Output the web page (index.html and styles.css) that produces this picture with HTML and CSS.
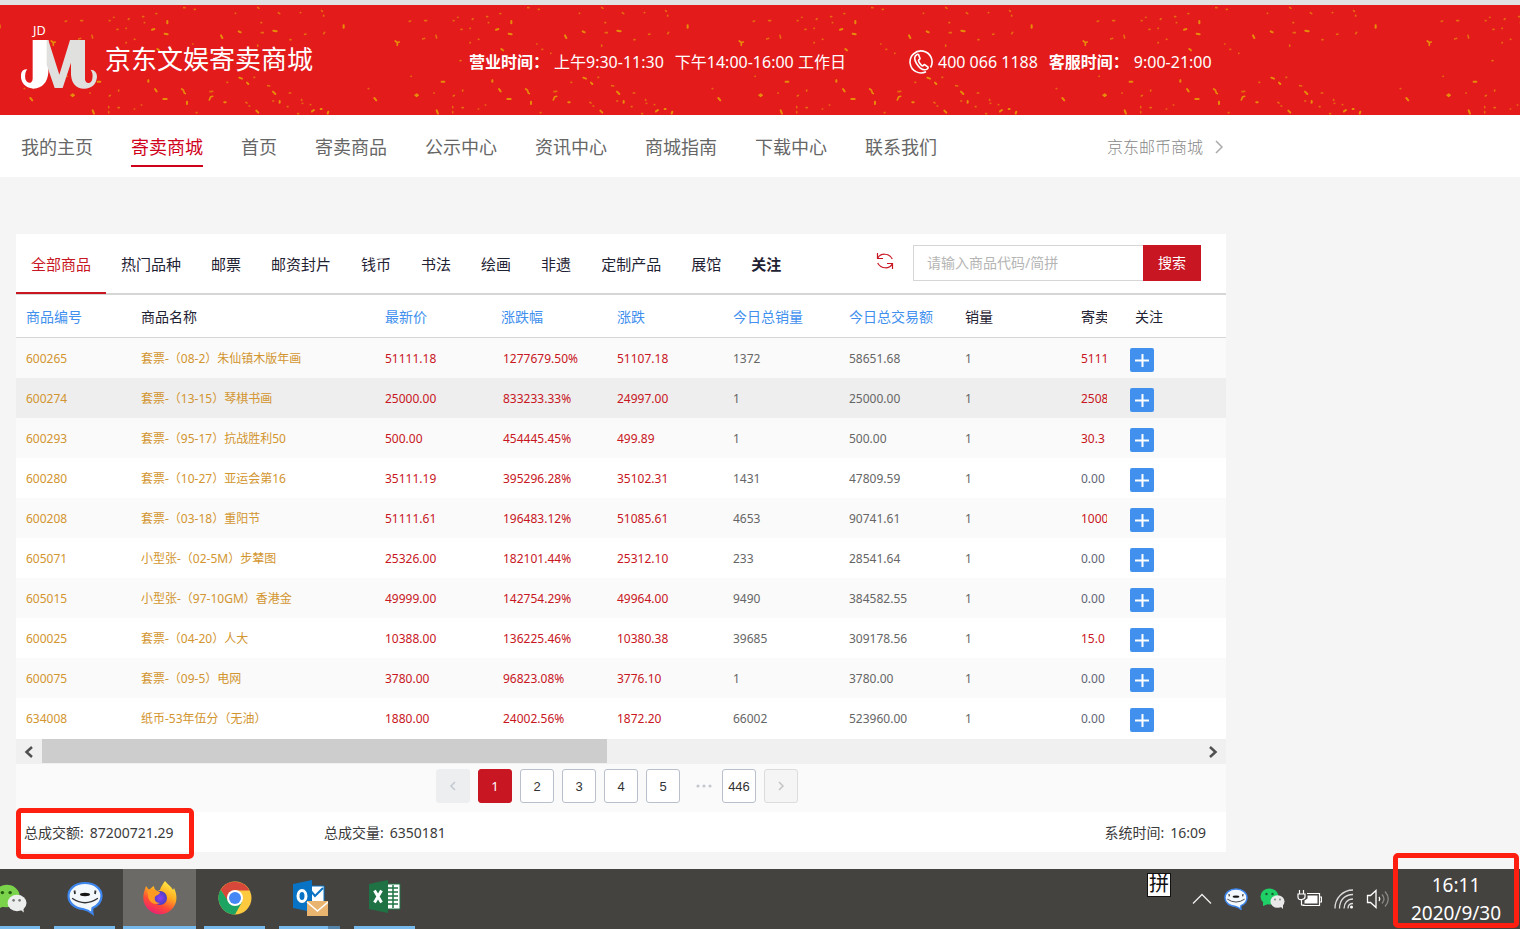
FILE: index.html
```html
<!DOCTYPE html>
<html lang="zh-CN">
<head>
<meta charset="utf-8">
<title>京东文娱寄卖商城</title>
<link rel="stylesheet" href="styles.css">
</head>
<body>
<svg class="defs" width="0" height="0" aria-hidden="true">
  <defs>
    <symbol id="i-plus" viewBox="0 0 24 24"><path d="M5 12.500H19M12.500 6V19" fill="none" stroke="#fff" stroke-width="2"/></symbol>
    <symbol id="i-wechat" viewBox="0 0 40 36">
      <ellipse cx="15" cy="14" rx="15" ry="13" fill="#7bd34b"/><path d="M5 23l-2 7 8-4z" fill="#7bd34b"/>
      <circle cx="10" cy="10" r="2" fill="#245b12"/><circle cx="19" cy="10" r="2" fill="#245b12"/>
      <ellipse cx="27" cy="22" rx="11" ry="9.500" fill="#eceeee"/><path d="M30 29l5 4-1-7z" fill="#eceeee"/>
      <circle cx="23" cy="19" r="1.500" fill="#777"/><circle cx="30" cy="19" r="1.500" fill="#777"/>
    </symbol>
    <symbol id="i-chat" viewBox="0 0 36 33">
      <path d="M18 1.500C8 1.500 1.500 7.500 1.500 14.500S8 27 16 27.500q5 1 9.500 4.500-.5-3 0-5.500C31 24 34.500 20 34.500 14.500 34.500 7.500 28 1.500 18 1.500z" fill="#f3f8fd" stroke="#3d86ee" stroke-width="2.200"/>
      <ellipse cx="18" cy="13" rx="5" ry="1.700" fill="#161616"/>
      <path d="M5.500 17Q18 25.500 30.500 17" fill="none" stroke="#333" stroke-width="1.300" stroke-linecap="round"/><path d="M7.500 9l.5 3.500M28.500 9l-.5 3.500" stroke="#333" stroke-width="1.800"/>
    </symbol>
  </defs>
</svg>

<header class="banner">
  <svg class="confetti" width="100%" height="100%" aria-hidden="true">
    <defs>
      <pattern id="flecks" x="108" y="0" width="344" height="110" patternUnits="userSpaceOnUse">
        <g transform="scale(.3333) translate(-96 -15)" fill="none" stroke="#e8a005" stroke-linecap="round">
          <path stroke-width="5" opacity=".6" d="M100 62h2M113 52h1M123 88h3M150 85h1M157 58l2-2M200 50h3M205 68h1M240 41h2M323 23h4M355 28h3M478 40h1M545 22l4 3M555 68h2M556 98h6M607 38l4 3M642 119h3M673 38h1M686 103l4-1M737 32l2 2M743 46v2M746 97l-3 4M545 135v4M350 132h1M366 148h2M120 182h3M150 128h1M175 118h2M1000 64l4-1M1046 62h6M1040 117l6-2M1080 106l2 8M128 270v3M100 288l3-2M402 275l8-1M361 338h2M126 323h4M98 320v3M98 335v3M175 327h1M196 315h1M453 247h2M534 232h2M575 257l6 1M640 279h4M590 303h3M510 307l3 2M519 318h2M677 299v2M679 310h1M665 341h3M634 320h2M703 314h1M877 266h1M1005 229h1M1074 279h1M392 160h1"/>
          <path stroke-width="6" opacity=".85" d="M228 89l7-2M274 63v7M266 101l9 2M435 106l4 8M488 94l6 3M592 92l10 2M803 76v7M244 147l5 4M217 241v4M237 267l5 7M262 297h10M333 305v7M445 307h4M490 233l8 3M513 248l4 4M591 275l7 7M611 303v5M541 332l6 6M708 334l6-4M734 327h3M757 335l-2 6M895 294l6 7M1018 286h8M1022 283v6M1082 331l4 10M1097 245h8"/>
          <path stroke-width="5" opacity=".85" d="M958 123l6 5 6-2M964 128v8M317 267l5 3 3 9 3 2M410 289l-6 2-4 9"/>
        </g>
      </pattern>
    </defs>
    <rect width="100%" height="100%" fill="url(#flecks)"/>
  </svg>
  <div class="banner-inner">
    <a class="brand" href="#">
      <svg class="logo" viewBox="60 70 234 198" role="img" aria-label="JD JM">
        <text class="logo-text" x="99" y="104">JD</text>
        <path fill="#fff" d="M98 118H145V216Q141 260 100 264Q61 258 63 222Q64 206 82 206Q73 216 76 235Q82 249 92 246Q98 244 98 234Z"/>
        <path fill="#e0e0df" d="M145 118L178 222 210 118H255V230Q254 246 264 247Q274 248 277 234Q280 218 272 207Q290 208 291 228Q288 262 252 264Q216 262 213 222V186L188 262H164L140 192V118Z"/>
      </svg>
      <span class="brand-name">京东文娱寄卖商城</span>
    </a>
    <div class="contact">
      <p class="hours"><b>营业时间：</b><span>上午9:30-11:30</span><span class="later">下午14:00-16:00 工作日</span></p>
      <p class="service">
        <svg class="phone" viewBox="0 0 24 24" fill="none" stroke="#fff" stroke-width="1.600" aria-hidden="true"><path d="M17 21.700A11 11 0 1 1 21.500 17.500"/><path d="M8 4.500C5 6 5 9.500 7.500 13.500S13.500 20.500 17 19.500C18.500 19 19.500 18 19 17L15.500 14.500C14.500 14.500 14.500 16 13.500 16 12 15.500 9.500 11.500 9.500 10.500 9.500 9.500 11 9.500 11 8.500L9.500 4.500C9 4 8.500 4.200 8 4.500z"/></svg>
        <span>400 066 1188</span><b class="later">客服时间：</b><span>9:00-21:00</span>
      </p>
    </div>
  </div>
</header>

<div class="nav-bar">
  <nav class="nav">
    <a href="#">我的主页</a><a class="current" href="#">寄卖商城</a><a href="#">首页</a><a href="#">寄卖商品</a><a href="#">公示中心</a><a href="#">资讯中心</a><a href="#">商城指南</a><a href="#">下载中心</a><a href="#">联系我们</a>
    <a class="partner" href="#">京东邮币商城<svg viewBox="0 0 8 14" aria-hidden="true"><path d="M1 1l6 6-6 6" fill="none" stroke="#aaa" stroke-width="1.500"/></svg></a>
  </nav>
</div>

<main class="panel">
  <div class="toolbar">
    <nav class="tabs">
      <a class="current" href="#">全部商品</a><a href="#">热门品种</a><a href="#">邮票</a><a href="#">邮资封片</a><a href="#">钱币</a><a href="#">书法</a><a href="#">绘画</a><a href="#">非遗</a><a href="#">定制产品</a><a href="#">展馆</a><a class="strong" href="#">关注</a>
    </nav>
    <form class="search">
      <button class="refresh" type="button" aria-label="刷新"><svg viewBox="0 0 18 18" fill="none" stroke="#c81623" stroke-width="1.200"><path d="M1.500 1v5.500H7M1.700 6.300C4 1 13 .5 16.300 7M16.500 17v-5.500H11M16.300 11.700C14 17 5 17.500 1.700 11"/></svg></button>
      <input type="text" aria-label="请输入商品代码/简拼" placeholder="请输入商品代码/简拼">
      <button class="submit" type="submit">搜索</button>
    </form>
  </div>

  <table class="goods">
    <colgroup><col class="c-code"><col class="c-name"><col class="c-num"><col class="c-num"><col class="c-num"><col class="c-num"><col class="c-num"><col class="c-num"><col class="c-cut"><col class="c-add"></colgroup>
    <thead>
      <tr><th><button>商品编号</button></th><th>商品名称</th><th><button>最新价</button></th><th><button>涨跌幅</button></th><th><button>涨跌</button></th><th><button>今日总销量</button></th><th><button>今日总交易额</button></th><th>销量</th><th>寄卖</th><th>关注</th></tr>
    </thead>
    <tbody>
      <tr><td>600265</td><td>套票-（08-2）朱仙镇木版年画</td><td>51111.18</td><td>1277679.50%</td><td>51107.18</td><td>1372</td><td>58651.68</td><td>1</td><td>5111</td><td><button class="add" aria-label="关注 600265"><svg><use href="#i-plus"/></svg></button></td></tr>
      <tr class="hover"><td>600274</td><td>套票-（13-15）琴棋书画</td><td>25000.00</td><td>833233.33%</td><td>24997.00</td><td>1</td><td>25000.00</td><td>1</td><td>2508</td><td><button class="add" aria-label="关注 600274"><svg><use href="#i-plus"/></svg></button></td></tr>
      <tr><td>600293</td><td>套票-（95-17）抗战胜利50</td><td>500.00</td><td>454445.45%</td><td>499.89</td><td>1</td><td>500.00</td><td>1</td><td>30.3</td><td><button class="add" aria-label="关注 600293"><svg><use href="#i-plus"/></svg></button></td></tr>
      <tr><td>600280</td><td>套票-（10-27）亚运会第16</td><td>35111.19</td><td>395296.28%</td><td>35102.31</td><td>1431</td><td>47809.59</td><td>1</td><td class="zero">0.00</td><td><button class="add" aria-label="关注 600280"><svg><use href="#i-plus"/></svg></button></td></tr>
      <tr><td>600208</td><td>套票-（03-18）重阳节</td><td>51111.61</td><td>196483.12%</td><td>51085.61</td><td>4653</td><td>90741.61</td><td>1</td><td>1000</td><td><button class="add" aria-label="关注 600208"><svg><use href="#i-plus"/></svg></button></td></tr>
      <tr><td>605071</td><td>小型张-（02-5M）步辇图</td><td>25326.00</td><td>182101.44%</td><td>25312.10</td><td>233</td><td>28541.64</td><td>1</td><td class="zero">0.00</td><td><button class="add" aria-label="关注 605071"><svg><use href="#i-plus"/></svg></button></td></tr>
      <tr><td>605015</td><td>小型张-（97-10GM）香港金</td><td>49999.00</td><td>142754.29%</td><td>49964.00</td><td>9490</td><td>384582.55</td><td>1</td><td class="zero">0.00</td><td><button class="add" aria-label="关注 605015"><svg><use href="#i-plus"/></svg></button></td></tr>
      <tr><td>600025</td><td>套票-（04-20）人大</td><td>10388.00</td><td>136225.46%</td><td>10380.38</td><td>39685</td><td>309178.56</td><td>1</td><td>15.0</td><td><button class="add" aria-label="关注 600025"><svg><use href="#i-plus"/></svg></button></td></tr>
      <tr><td>600075</td><td>套票-（09-5）电网</td><td>3780.00</td><td>96823.08%</td><td>3776.10</td><td>1</td><td>3780.00</td><td>1</td><td class="zero">0.00</td><td><button class="add" aria-label="关注 600075"><svg><use href="#i-plus"/></svg></button></td></tr>
      <tr><td>634008</td><td>纸币-53年伍分（无油）</td><td>1880.00</td><td>24002.56%</td><td>1872.20</td><td>66002</td><td>523960.00</td><td>1</td><td class="zero">0.00</td><td><button class="add" aria-label="关注 634008"><svg><use href="#i-plus"/></svg></button></td></tr>
    </tbody>
  </table>

  <div class="scroll">
    <button aria-label="向左滚动"><svg viewBox="0 0 10 12"><path d="M8 1L2.500 6 8 11" fill="none" stroke="#505050" stroke-width="2.500"/></svg></button>
    <div class="track"><div class="thumb"></div></div>
    <button aria-label="向右滚动"><svg viewBox="0 0 10 12"><path d="M2 1l5.500 5L2 11" fill="none" stroke="#505050" stroke-width="2.500"/></svg></button>
  </div>

  <nav class="pages" aria-label="分页">
    <button class="prev" disabled aria-label="上一页"><svg viewBox="0 0 8 12"><path d="M6 2L2 6l4 4" fill="none" stroke="#c3c7cf" stroke-width="1.500"/></svg></button>
    <button class="active">1</button><button>2</button><button>3</button><button>4</button><button>5</button>
    <svg class="dots" viewBox="0 0 26 6" fill="#c4c8ce" aria-hidden="true"><circle cx="10" cy="3" r="1.600"/><circle cx="16" cy="3" r="1.600"/><circle cx="22" cy="3" r="1.600"/></svg>
    <button>446</button>
    <button class="next" aria-label="下一页"><svg viewBox="0 0 8 12"><path d="M2 2l4 4-4 4" fill="none" stroke="#c4c4c4" stroke-width="1.500"/></svg></button>
  </nav>

  <div class="summary">
    <p class="marked"><span>总成交额:</span><span>87200721.29</span></p>
    <p><span>总成交量:</span><span>6350181</span></p>
    <p class="system"><span>系统时间:</span><span>16:09</span></p>
  </div>
</main>

<footer class="taskbar">
  <div class="apps">
    <button class="app first" aria-label="微信"><svg viewBox="0 0 40 57"><use href="#i-wechat" x="-7" y="15" width="36" height="31"/></svg></button>
    <button class="app" aria-label="咚咚"><svg class="icon"><use href="#i-chat"/></svg></button>
    <button class="app focus" aria-label="Firefox">
      <svg class="icon" viewBox="0 0 36 36">
        <defs>
          <linearGradient id="fox" x1=".8" y1="0" x2=".3" y2="1"><stop offset="0" stop-color="#fff04a"/><stop offset=".4" stop-color="#ffab20"/><stop offset=".7" stop-color="#ff4a36"/><stop offset="1" stop-color="#e91e78"/></linearGradient>
          <radialGradient id="globe"><stop offset="0" stop-color="#8a3ff5"/><stop offset="1" stop-color="#4a3fc0"/></radialGradient>
        </defs>
        <path fill="url(#fox)" d="M23 1c3 4 6 5 8 9l1-2c4 8 3 16-2 21-6 7-18 7-24 0C1 24 0 17 3 9l1-3 3 4c2-2 3-3 5-4 0 2 1 4 3 5l3-1c1-4 3-6 5-9z"/>
        <circle cx="18" cy="18" r="7" fill="url(#globe)"/>
        <path fill="#ff9a22" d="M5 10c5-3 8 1 13 2 0 3-4 3-5 5-1 3 1 6 5 6-7 3-12-2-12-8z"/>
      </svg>
    </button>
    <button class="app" aria-label="Chrome">
      <svg class="icon" viewBox="0 0 36 36">
        <circle cx="18" cy="18" r="16.500" fill="#fdc93f"/>
        <path d="M3.700 9.750A16.500 16.500 0 0 1 32.500 10.500H18L11 22z" fill="#d8483a"/>
        <path d="M3.700 9.750A16.500 16.500 0 0 0 18 34.500L25 22 11 21z" fill="#1da462"/>
        <circle cx="18" cy="18" r="8" fill="#fff"/><circle cx="18" cy="18" r="6" fill="#4587f4"/>
      </svg>
    </button>
    <button class="app stacked" aria-label="Outlook">
      <svg class="icon" viewBox="0 0 36 36">
        <path d="M17 6h15v18H17z" fill="#fff" stroke="#0872c4"/><path d="M18 10l5 6 8-8" fill="none" stroke="#0872c4" stroke-width="2"/>
        <path d="M1 4L20 0v32L1 28z" fill="#0872c4"/><ellipse cx="10" cy="16" rx="4" ry="5.500" fill="none" stroke="#fff" stroke-width="3"/>
        <path d="M15 21h21v15H15z" fill="#e9b46f"/><path d="M15 22l10.500 9L36 22" fill="none" stroke="#fff" stroke-width="1.500"/>
      </svg>
    </button>
    <button class="app" aria-label="Excel">
      <svg class="icon" viewBox="0 0 36 36">
        <path d="M18 4h15v25H18z" fill="#fff" stroke="#1f7244"/><path d="M20 8h11M20 12h11M20 16h11M20 20h11M20 24h11M26 5v23" stroke="#1f7244" stroke-width="1.500"/>
        <path d="M2 4l19-4v33L2 29z" fill="#1f7244"/><path d="M7.500 10.500l7 12M14.500 10.500l-7 12" stroke="#fff" stroke-width="3"/>
      </svg>
    </button>
  </div>
  <div class="tray">
    <span class="ime">拼</span>
    <svg width="20" height="12" viewBox="0 0 20 12"><path d="M1 10.500l9-9 9 9" fill="none" stroke="#eee" stroke-width="1.300"/></svg>
    <svg width="24" height="22"><use href="#i-chat"/></svg>
    <svg width="25" height="22" viewBox="0 0 25 22"><ellipse cx="9.500" cy="8.500" rx="9" ry="8" fill="#1fd066"/><path d="M3 14l0 4 5-2z" fill="#1fd066"/><circle cx="6.500" cy="6" r="1.200" fill="#155d30"/><circle cx="12.500" cy="6" r="1.200" fill="#155d30"/><ellipse cx="17.500" cy="13.500" rx="7" ry="6.300" fill="#e9e9e9"/><path d="M20 18l3 3v-5z" fill="#e9e9e9"/><circle cx="15" cy="11.500" r="1" fill="#888"/><circle cx="20" cy="11.500" r="1" fill="#888"/></svg>
    <svg width="25" height="20" viewBox="0 0 25 20" fill="none" stroke="#fff" stroke-width="1.200"><path d="M2.500 1v4M6.500 1v4M1 5h7v3q0 2-3.500 2.500T1 8zM4.500 10.500V16h3"/><path d="M10 4.500h12.500v12h-17M23 8h1.500v5H23"/><path d="M10.500 6.500h10v8h-13v-3l3-2z" fill="#fff" stroke="none"/></svg>
    <svg width="20" height="20" viewBox="0 0 20 20" fill="none" stroke="#ddd" stroke-width="1.300"><path d="M1 19.500C1 9 9 1 19 1M5.500 19.500C5.500 11 11 5.500 19 5.500M10 19.500C10 14 13.500 10 19 10"/><path d="M14 19.500c0-3 2-5 5-5"/><circle cx="17.500" cy="18" r="1.500" fill="#fff" stroke="none"/></svg>
    <svg width="24" height="20" viewBox="0 0 24 20" fill="none" stroke="#fff" stroke-width="1.300"><path d="M1.500 6.500h3L10 1.500v17l-5.500-5h-3z"/><path d="M13 8q1.500 2 0 4"/><path d="M16 5.500q4 4.500 0 9M19 2.500q6.500 7.500 0 15" stroke="#8b8a87"/></svg>
    <div class="clock"><time>16:11</time><time>2020/9/30</time></div>
  </div>
</footer>
</body>
</html>
```

FILE: styles.css
```css
*, *::after { box-sizing: border-box; }

body {
  margin: 0;
  min-height: 100vh;
  display: flex;
  flex-direction: column;
  background: #f5f5f5;
  border-top: 5px solid #e2e2e2;
  color: #1f2233;
  font: 14px/20px "Noto Sans", "Noto Sans CJK SC", sans-serif;
}

a { color: inherit; text-decoration: none; }
p { margin: 0; }
button { font: inherit; color: inherit; border: 0; padding: 0; background: none; cursor: pointer; }
svg { display: block; }
.defs { position: absolute; }

/* banner */
.banner { position: relative; background: #e31b1b; color: #fff; height: 110px; }
.confetti { position: absolute; inset: 0; }
.banner-inner {
  position: relative;
  display: flex;
  align-items: center;
  justify-content: space-between;
  max-width: 1226px;
  height: 100%;
  padding: 0 10px 0 20px;
}
.brand { display: flex; align-items: center; gap: 7px; padding-bottom: 2px; }
.logo { width: 78px; height: 66px; margin-bottom: 4px; overflow: visible; }
.logo-text { font: 38px "Noto Sans", sans-serif; fill: #fff; }
.brand-name { font-size: 26px; line-height: 40px; }
.contact { display: flex; font-size: 16px; line-height: 24px; padding-top: 4px; }
.contact p { display: flex; align-items: center; gap: 5px; white-space: nowrap; }
.contact .hours { min-width: 440px; }
.contact .service { min-width: 307px; }
.contact .later { margin-left: 6px; }
.phone { width: 24px; height: 24px; }

/* site navigation */
.nav-bar { background: #fff; }
.nav {
  display: flex;
  gap: 38px;
  max-width: 1226px;
  padding: 12px 3px 10px 21px;
  font-size: 18px;
  line-height: 40px;
  color: #666;
}
.nav .current { color: #d0021b; border-bottom: 2px solid #d0021b; height: 40px; }
.partner { display: flex; align-items: center; gap: 12px; margin-left: auto; font-size: 16px; font-weight: 300; color: #888; }
.partner svg { width: 8px; height: 14px; }

/* goods panel */
.panel { max-width: 1210px; margin: 57px 0 17px 16px; background: #fff; }
.toolbar { display: flex; justify-content: space-between; height: 61px; border-bottom: 2px solid #d6d6d6; }
.tabs { display: flex; font-size: 15px; line-height: 60px; }
.tabs a { padding: 0 15px; height: 60px; }
.tabs .current { color: #c81623; border-bottom: 2px solid #c81623; }
.tabs .strong { font-weight: 700; }
.search { display: flex; align-items: center; padding: 0 25px 2px 0; }
.refresh { margin: 0 19px 4px 0; }
.refresh svg { width: 18px; height: 18px; }
.search input {
  width: 230px;
  height: 36px;
  padding: 0 13px;
  border: 1px solid #d6d6d6;
  border-right: 0;
  font: inherit;
  color: #333;
}
.search input::placeholder { color: #b5b5b5; }
.submit { width: 58px; height: 36px; background: #c81623; color: #fff; }

.goods { width: 100%; table-layout: fixed; border-collapse: separate; border-spacing: 0; }
.c-code { width: 115px; }
.c-name { width: 244px; }
.c-num { width: 116px; }
.c-cut { width: 36px; }
.c-add { width: 119px; }
.goods th {
  height: 43px;
  padding: 2px 0 0 10px;
  border-bottom: 1px solid #d6d6d6;
  font-weight: 400;
  text-align: left;
  white-space: nowrap;
  overflow: hidden;
}
.goods th button { color: #4190ee; }
.goods td {
  height: 40px;
  padding: 2px 0 0 10px;
  font-size: 12px;
  color: #666;
  white-space: nowrap;
  overflow: hidden;
}
/* the consignment column shows only what its narrow cell can hold */
.goods th:nth-child(9) { width: 36px; padding-right: 1px; text-overflow: clip; }
.goods th:last-child { padding-left: 28px; }
.goods tbody tr:nth-child(odd) { background: #fafafa; }
.goods tbody tr.hover { background: #eee; }
.goods td:nth-child(-n+2) { color: #d2952f; }
.goods td:nth-child(3), .goods td:nth-child(4), .goods td:nth-child(5), .goods td:nth-child(9) { color: #c81623; }
.goods td:nth-child(4) { padding-left: 12px; }
.goods td.zero { color: #5f6478; }
.goods td:last-child { padding: 3px 0 0 23px; }
.add { display: block; width: 24px; height: 24px; border-radius: 2px; background: #4190ee; }
.add svg { width: 24px; height: 24px; }

.scroll { display: flex; height: 25px; margin-top: 1px; background: #f0f0f0; }
.scroll button { display: grid; place-items: center; width: 26px; }
.scroll svg { width: 10px; height: 12px; }
.track { flex: 1; }
.thumb { width: 48.8%; height: 24px; background: #cdcdcd; }

.pages {
  display: flex;
  justify-content: center;
  align-items: center;
  gap: 8px;
  height: 48px;
  padding: 0 8px 4px 0;
  background: #fafafa;
}
.pages button {
  display: grid;
  place-items: center;
  width: 34px;
  height: 34px;
  padding-top: 2px;
  border: 1px solid #b9c0cb;
  border-radius: 3px;
  background: #fff;
  color: #333;
  font: 13px/20px "Liberation Sans", sans-serif;
}
.pages button svg { width: 8px; height: 12px; }
.pages .prev { padding: 0; background: #eceef0; border-color: #eceef0; }
.pages .next { padding: 0; background: #f5f5f5; border-color: #dcdcdc; }
.pages .active { padding: 0; background: #c81623; border-color: #c81623; color: #fff; font-family: "Noto Sans", sans-serif; }
.dots { width: 26px; height: 6px; }

.summary { display: flex; height: 40px; padding: 0 20px 0 8px; line-height: 42px; color: #3a3a3a; }
.summary p { display: flex; gap: 6px; width: 300px; }
.summary .system { width: auto; margin-left: auto; }
.marked { position: relative; }
.marked::after, .clock::after {
  content: "";
  position: absolute;
  border: 5px solid #ff1f10;
  border-radius: 5px;
}
.marked::after { left: -8px; top: -4px; width: 178px; height: 51px; }

/* desktop taskbar */
.taskbar { display: flex; justify-content: space-between; height: 60px; margin-top: auto; background: #45433f; color: #fff; }
.apps { display: flex; }
.app { display: grid; place-items: center; width: 61px; margin-right: 14px; border-bottom: 3px solid #76b9ed; }
.app.first { width: 40px; }
.app.first svg { width: 40px; height: 57px; }
.app.focus { width: 73px; margin: 0 8px 0 -6px; background: #6b6a66; }
.app.stacked { border-image: linear-gradient(90deg, #76b9ed 47px, #5585ab 47px) 3; }
.icon { width: 36px; height: 36px; }
.tray { display: flex; align-items: center; gap: 12px; padding-right: 1px; }
.ime {
  align-self: flex-start;
  width: 24px;
  height: 24px;
  margin: 4px 9px 0 0;
  border: 1px solid #111;
  background: #fff;
  color: #111;
  font-size: 20px;
  line-height: 20px;
  text-align: center;
}
.clock { position: relative; width: 126px; margin-left: -9px; font-size: 19px; line-height: 28px; text-align: center; }
.clock time { display: block; }
.clock::after { left: 0; right: 0; top: -18px; bottom: -1px; }
```
